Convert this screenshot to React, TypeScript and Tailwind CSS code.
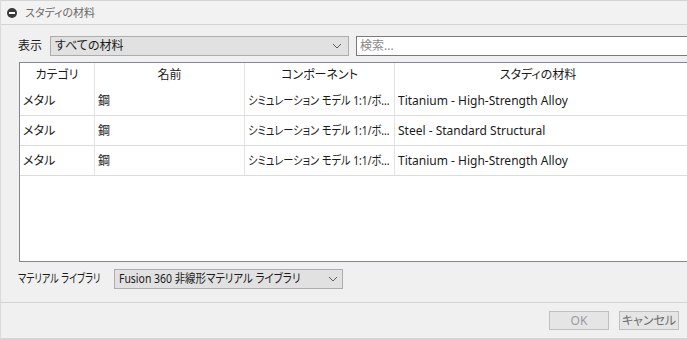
import React from "react";

function Chevron() {
  return (
    <svg width="10" height="6" viewBox="0 0 10 6" className="shrink-0">
      <path d="M1 1 L5 5 L9 1" fill="none" stroke="#5a5a5a" strokeWidth="1" />
    </svg>
  );
}

const rows = [
  ["メタル", "鋼", "シミュレーション モデル 1:1/ボ...", "Titanium - High-Strength Alloy"],
  ["メタル", "鋼", "シミュレーション モデル 1:1/ボ...", "Steel - Standard Structural"],
  ["メタル", "鋼", "シミュレーション モデル 1:1/ボ...", "Titanium - High-Strength Alloy"],
];

export default function App() {
  return (
    <div className="w-[687px] h-[339px] overflow-hidden bg-[#f0f0f0] flex flex-col text-[12px] text-[#1a1a1a] border-l border-[#dadada] font-['Noto_Sans','Noto_Sans_CJK_JP',sans-serif] [font-feature-settings:'palt']">
      {/* title bar */}
      <div className="h-[25px] shrink-0 flex items-center gap-[8px] pl-[6px] border-b border-t border-[#d4d4d4] bg-[#f2f2f2]">
        <div className="w-[10px] h-[10px] rounded-full bg-[#3a3a3a] flex items-center justify-center">
          <div className="w-[6px] h-[2px] bg-white" />
        </div>
        <span className="text-[11px] text-[#6a6a6a] leading-none">スタディの材料</span>
      </div>

      {/* filter row */}
      <div className="mt-[11px] flex items-center pl-[17px] h-[20px] shrink-0">
        <span className="w-[32px] shrink-0 leading-none">表示</span>
        <div className="w-[299px] shrink-0 h-[20px] border border-[#adadad] bg-[#e1e1e1] flex items-center justify-between pl-[4px] pr-[6px]">
          <span className="leading-none">すべての材料</span>
          <Chevron />
        </div>
        <div className="ml-[7px] w-[340px] h-[20px] shrink-0 border border-[#7a7a7a] bg-white flex items-center pl-[3px]">
          <span className="leading-none text-[#8a8a8a]">検索...</span>
        </div>
      </div>

      {/* table */}
      <div className="mt-[6px] ml-[18px] w-[680px] h-[200px] shrink-0 border border-[#828790] bg-white overflow-hidden">
        <div className="flex h-[23px]">
          <div className="w-[75px] shrink-0 border-r border-[#e3e3e3] flex items-center justify-center leading-none">カテゴリ</div>
          <div className="w-[150px] shrink-0 border-r border-[#e3e3e3] flex items-center justify-center leading-none">名前</div>
          <div className="w-[150px] shrink-0 border-r border-[#e3e3e3] flex items-center justify-center leading-none">コンポーネント</div>
          <div className="w-[286px] shrink-0 flex items-center justify-center leading-none">スタディの材料</div>
        </div>
        {rows.map((r, i) => (
          <div key={i} className="flex h-[30px] border-b border-[#dcdcdc]">
            <div className="w-[75px] shrink-0 border-r border-[#e3e3e3] flex items-center pl-[3px] leading-none">{r[0]}</div>
            <div className="w-[150px] shrink-0 border-r border-[#e3e3e3] flex items-center pl-[3px] leading-none">{r[1]}</div>
            <div className="w-[150px] shrink-0 border-r border-[#e3e3e3] flex items-center pl-[3px] leading-none overflow-hidden">
              <span className="inline-block whitespace-nowrap origin-left scale-x-[0.85]">{r[2]}</span>
            </div>
            <div className="w-[286px] shrink-0 flex items-center pl-[3px] leading-none whitespace-nowrap">{r[3]}</div>
          </div>
        ))}
      </div>

      {/* library row */}
      <div className="mt-[7px] flex items-center pl-[17px] h-[20px] shrink-0">
        <div className="w-[96px] shrink-0 leading-none overflow-visible">
          <span className="inline-block whitespace-nowrap origin-left scale-x-[0.76]">マテリアル ライブラリ</span>
        </div>
        <div className="w-[229px] shrink-0 h-[20px] border border-[#adadad] bg-[#e1e1e1] flex items-center justify-between pl-[4px] pr-[8px]">
          <span className="inline-block leading-none whitespace-nowrap origin-left scale-x-[0.87]">Fusion 360 非線形マテリアル ライブラリ</span>
          <Chevron />
        </div>
      </div>

      {/* footer */}
      <div className="mt-[13px] flex-1 border-t border-b border-[#d4d4d4] bg-[#f0f0f0] flex items-start justify-end pr-[8px] pt-[8px] gap-[10px]">
        <div className="w-[60px] h-[19px] border border-[#bfbfbf] bg-[#e5e5e5] flex items-center justify-center leading-none text-[#9a9aa6]">OK</div>
        <div className="w-[60px] h-[19px] border border-[#bfbfbf] bg-[#e5e5e5] flex items-center justify-center leading-none text-[#6d6d6d] whitespace-nowrap">キャンセル</div>
      </div>
    </div>
  );
}
